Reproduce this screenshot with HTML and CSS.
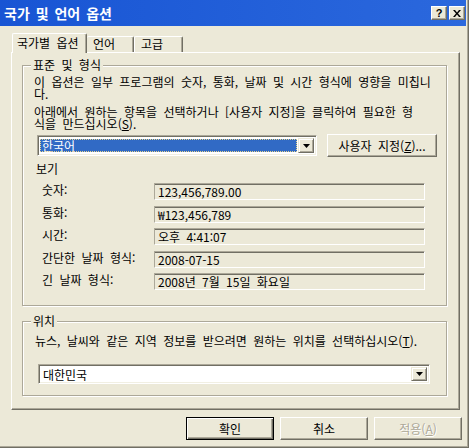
FILE: index.html
```html
<!DOCTYPE html>
<html lang="ko">
<head>
    <meta charset="UTF-8">
    <title>국가 및 언어 옵션</title>
    <link rel="stylesheet" href="styles.css">
</head>
<body>

    <div class="window">
        <!-- 제목 표시줄 -->
        <div class="titlebar">
            <span class="title">국가 및 언어 옵션</span>
            <div class="caption-buttons">
                <span class="cap-btn cap-help">?</span>
                <span class="cap-btn">
                    <svg width="8" height="7" viewBox="0 0 8 7">
                        <path d="M0 0h2l2 2.5L6 0h2L5 3.5 8 7H6L4 4.5 2 7H0l3-3.5z" fill="#000"/>
                    </svg>
                </span>
            </div>
        </div>

        <div class="content">
            <!-- 탭 -->
            <div class="tabs">
                <div class="tab active">국가별 옵션</div>
                <div class="tab tab-lang">언어</div>
                <div class="tab tab-adv">고급</div>
            </div>

            <div class="panel">
                <fieldset class="group group-format">
                    <legend>표준 및 형식</legend>
                    <p class="desc desc-first">이 옵션은 일부 프로그램의 숫자, 통화, 날짜 및 시간 형식에 영향을 미칩니<br>다.</p>
                    <p class="desc desc-second">아래에서 원하는 항목을 선택하거나 [사용자 지정]을 클릭하여 필요한 형<br>식을 만드십시오(<u>S</u>).</p>

                    <div class="format-row">
                        <div class="combo combo-locale">
                            <span class="combo-value selected">한국어</span>
                            <span class="combo-arrow">
                                <svg width="7" height="4" viewBox="0 0 7 4"><path d="M0 0h7L3.5 4z" fill="#000"/></svg>
                            </span>
                        </div>
                        <button class="btn btn-custom">사용자 지정(<u>Z</u>)...</button>
                    </div>

                    <div class="preview-title">보기</div>
                    <div class="preview">
                        <span class="preview-label">숫자:</span>
                        <span class="preview-value">123,456,789.00</span>
                        <span class="preview-label">통화:</span>
                        <span class="preview-value">₩123,456,789</span>
                        <span class="preview-label">시간:</span>
                        <span class="preview-value">오후 4:41:07</span>
                        <span class="preview-label">간단한 날짜 형식:</span>
                        <span class="preview-value">2008-07-15</span>
                        <span class="preview-label">긴 날짜 형식:</span>
                        <span class="preview-value">2008년 7월 15일 화요일</span>
                    </div>
                </fieldset>

                <fieldset class="group group-location">
                    <legend>위치</legend>
                    <p class="desc desc-location">뉴스, 날씨와 같은 지역 정보를 받으려면 원하는 위치를 선택하십시오(<u>T</u>).</p>
                    <div class="combo combo-location">
                        <span class="combo-value">대한민국</span>
                        <span class="combo-arrow">
                            <svg width="7" height="4" viewBox="0 0 7 4"><path d="M0 0h7L3.5 4z" fill="#000"/></svg>
                        </span>
                    </div>
                </fieldset>
            </div>

            <!-- 하단 버튼 -->
            <div class="actions">
                <button class="btn btn-default">확인</button>
                <button class="btn">취소</button>
                <button class="btn" disabled>적용(<u>A</u>)</button>
            </div>
        </div>
    </div>

</body>
</html>
```

FILE: styles.css
```css
/* 클래식 XP 대화 상자 */
body {
    margin: 0;
    background-color: #ECE9D8;
    font-family: "Noto Sans CJK KR", "Liberation Sans", sans-serif;
    font-size: 12px;
    word-spacing: 3px;
    color: #000;
}

.window {
    width: 469px;
    height: 448px;
    box-sizing: border-box;
    background-color: #ECE9D8;
    border-right: 1px solid #716F64;
    border-bottom: 1px solid #716F64;
    padding-right: 2px;
    padding-bottom: 2px;
    box-shadow: inset -1px -1px 0 #ACA899;
}

.titlebar {
    height: 26px;
    display: flex;
    align-items: center;
    padding: 0 1px 0 4px;
    background: linear-gradient(to right, #1855d4, #2b68dd);
}

.title {
    flex: 1;
    color: #fff;
    font-weight: bold;
    font-size: 14px;
    word-spacing: 2px;
    line-height: 26px;
}

.caption-buttons {
    display: flex;
    gap: 2px;
}

.cap-btn {
    width: 16px;
    height: 14px;
    box-sizing: border-box;
    display: flex;
    align-items: center;
    justify-content: center;
    background-color: #ECE9D8;
    border: 1px solid;
    border-color: #fff #716F64 #716F64 #fff;
    box-shadow: inset -1px -1px 0 #ACA899;
}

.cap-help {
    font-family: "Liberation Sans", sans-serif;
    font-weight: bold;
    font-size: 11px;
    line-height: 12px;
}

.content {
    padding-top: 7px;
}

/* 탭 */
.tabs {
    display: flex;
    align-items: flex-end;
    height: 19px;
    margin-left: 12px;
}

.tab {
    box-sizing: border-box;
    height: 16px;
    line-height: 14px;
    padding-left: 6px;
    border-top: 1px solid #fff;
    border-left: 1px solid #fff;
    border-right: 1px solid #716F64;
    border-radius: 2px 2px 0 0;
    box-shadow: inset -1px 0 0 #ACA899;
    white-space: nowrap;
}

.tab.active {
    position: relative;
    z-index: 1;
    width: 75px;
    height: 20px;
    margin-bottom: -1px;
    padding-left: 4px;
    line-height: 18px;
    background-color: #ECE9D8;
}

.tab-lang {
    width: 47px;
    border-left: none;
}

.tab-adv {
    width: 49px;
}

.panel {
    width: 449px;
    margin-left: 11px;
    box-sizing: border-box;
    border: 1px solid;
    border-color: #fff #716F64 #716F64 #fff;
    box-shadow: inset -1px -1px 0 #ACA899;
    padding-top: 5px;
    padding-bottom: 13px;
}

/* 그룹 상자 */
.group {
    margin: 0 12px 0 10px;
    padding: 0;
    border: 1px solid #ACA899;
    box-shadow: inset 1px 1px 0 #fff, 1px 1px 0 #fff;
    min-inline-size: 0;
}

.group legend {
    margin-left: 8px;
    padding: 0 2px;
    line-height: 14px;
    background-color: #ECE9D8;
}

.group-format {
    padding-bottom: 15px;
}

.group-location {
    margin-top: 8px;
    padding-bottom: 11px;
}

.desc {
    margin: 0 0 0 11px;
    line-height: 12px;
    white-space: nowrap;
}

.desc-first {
    margin-top: 4px;
}

.desc-second {
    margin-top: 6px;
}

.desc-location {
    margin-top: 7px;
    margin-left: 12px;
}

u {
    text-underline-offset: 1px;
}

/* 콤보 상자 */
.format-row {
    display: flex;
    align-items: center;
    height: 23px;
    margin-top: 4px;
}

.combo {
    display: flex;
    box-sizing: border-box;
    height: 21px;
    padding: 2px;
    background-color: #fff;
    border: 1px solid;
    border-color: #ACA899 #fff #fff #ACA899;
    box-shadow: inset 1px 1px 0 #716F64, inset -1px -1px 0 #F1EFE2;
}

.combo-locale {
    width: 280px;
    margin-left: 14px;
}

.combo-location {
    width: 392px;
    height: 20px;
    margin-top: 17px;
    margin-left: 15px;
}

.combo-value {
    flex: 1;
    line-height: 15px;
    padding-left: 2px;
}

.combo-value.selected {
    margin: 1px 1px 1px 0;
    background-color: #316AC5;
    color: #fff;
    outline: 1px dotted #E7D48E;
    outline-offset: -1px;
    line-height: 13px;
}

.combo-arrow {
    width: 16px;
    box-sizing: border-box;
    display: flex;
    align-items: center;
    justify-content: center;
    background-color: #ECE9D8;
    border: 1px solid;
    border-color: #ECE9D8 #716F64 #716F64 #ECE9D8;
    box-shadow: inset 1px 1px 0 #fff, inset -1px -1px 0 #ACA899;
}

/* 버튼 */
.btn {
    box-sizing: border-box;
    width: 88px;
    height: 23px;
    padding: 0;
    font-family: inherit;
    font-size: 12px;
    word-spacing: 3px;
    color: #000;
    background-color: #ECE9D8;
    border: 1px solid;
    border-color: #fff #716F64 #716F64 #fff;
    box-shadow: inset -1px -1px 0 #ACA899;
}

.btn-custom {
    width: 110px;
    margin-left: 10px;
}

.btn-default {
    border-color: #000;
    box-shadow: inset 1px 1px 0 #fff, inset -1px -1px 0 #716F64, inset -2px -2px 0 #ACA899;
}

.btn:disabled {
    color: #ACA899;
    text-shadow: 1px 1px 0 #fff;
}

/* 보기 */
.preview-title {
    margin: 6px 0 0 13px;
    line-height: 11px;
}

.preview {
    display: grid;
    grid-template-columns: 112px 271px;
    row-gap: 5.5px;
    align-items: center;
    margin: 9px 0 0 19px;
}

.preview-label {
    line-height: 14px;
    margin-top: -3px;
    white-space: nowrap;
}

.preview-value {
    box-sizing: border-box;
    height: 17px;
    padding-left: 3px;
    line-height: 15px;
    border: 1px solid;
    border-color: #ACA899 #fff #fff #ACA899;
    box-shadow: inset 0 1px 0 #716F64;
    white-space: nowrap;
}

.actions {
    display: flex;
    justify-content: flex-end;
    gap: 6px;
    margin-top: 7px;
    margin-right: 4px;
}
```
